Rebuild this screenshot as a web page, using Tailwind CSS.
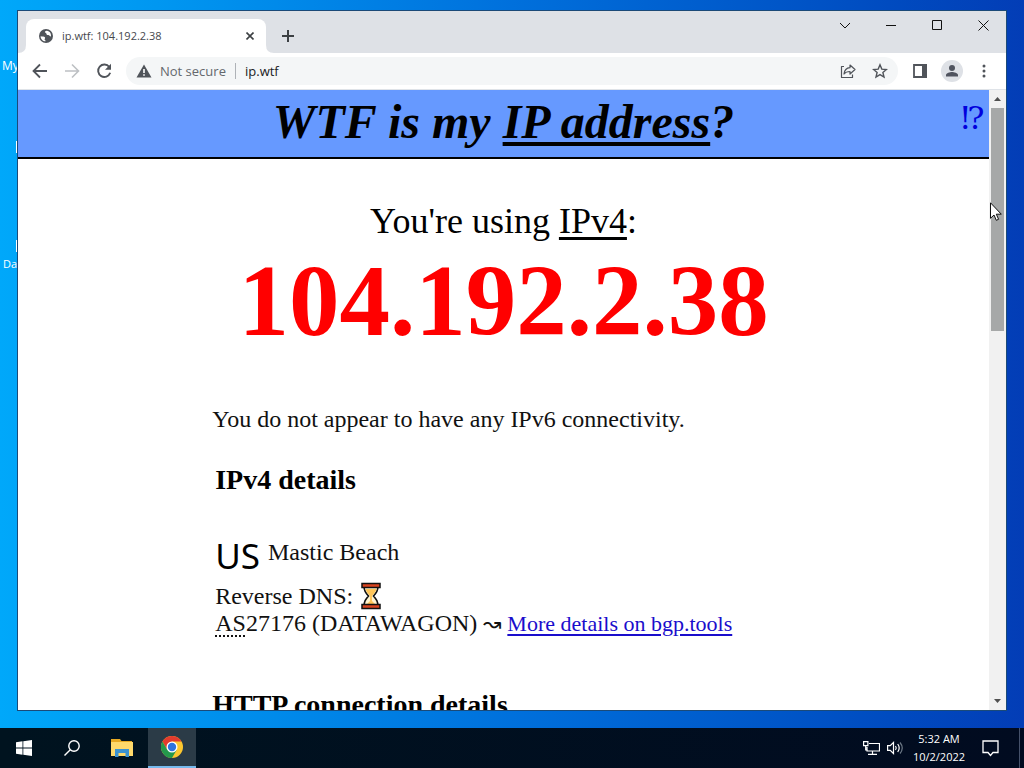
<!DOCTYPE html>
<html lang="en">
<head>
<meta charset="utf-8">
<title>ip.wtf: 104.192.2.38</title>
<script src="https://cdn.jsdelivr.net/npm/@tailwindcss/browser@4"></script>
</head>
<body class="relative flex h-screen flex-col overflow-hidden bg-linear-to-r from-[#00a8fa] via-[#0070dc] to-[#033db6] font-['Open_Sans','Noto_Sans',sans-serif]">
  <!-- Desktop shortcuts partly covered by the browser window -->
  <div class="absolute top-[58px] left-[2px] text-[12px] leading-4 text-white">My</div>
  <div class="absolute top-[141px] left-4 h-3 w-4 bg-white"></div>
  <div class="absolute top-[240px] left-4 h-3 w-4 bg-white"></div>
  <div class="absolute top-[256px] left-[3px] text-[11px] leading-4 text-white">Da</div>

  <!-- Browser window -->
  <section class="relative mt-[10px] mr-[17px] mb-[17px] ml-[17px] flex min-h-0 flex-1 flex-col border border-[#1b4a78] bg-white">
    <header class="flex h-[42px] shrink-0 items-end bg-[#dee1e6] pl-2">
      <div class="relative flex h-[34px] w-60 items-center rounded-t-lg bg-white pr-2 pl-3">
        <svg class="size-4 shrink-0" viewBox="0 0 16 16"><circle cx="8" cy="8" r="7" fill="#50545a"/><path d="M2.6 8.2c1.8.2 3.6.3 4.3 1.1.8.9-.5 1.4-.3 2.3.2.7 1.1.7 1 1.7-2.900 0-5-2.300-5-5.100ZM8.800 2.700c-1.600.3-2.300 1.200-1.700 1.900.6.6 1.200.2 1.300 1.200.1 1 .8 1.300 1.900 1.200 1.300 0 1.200 1.500 2.600 1.600C13.500 6 12 3 8.800 2.700Z" fill="#fff"/></svg>
        <span class="ml-2 flex-1 text-[11px] leading-4 text-[#45484d]">ip.wtf: 104.192.2.38</span>
        <button aria-label="Close tab" class="grid size-4 place-items-center"><svg class="size-2" viewBox="0 0 8 8" fill="none" stroke="#3c4043" stroke-width="1.600"><path d="M0.500.5l7 7M7.500.5l-7 7"/></svg></button>
        <svg class="absolute bottom-0 -left-2 size-2" viewBox="0 0 8 8"><path d="M8 0v8H0Q8 8 8 0" fill="#fff"/></svg>
        <svg class="absolute -right-2 bottom-0 size-2" viewBox="0 0 8 8"><path d="M0 0v8h8Q0 8 0 0" fill="#fff"/></svg>
      </div>
      <button aria-label="New tab" class="ml-[14px] grid h-[34px] w-4 place-items-center"><svg class="size-3" viewBox="0 0 12 12" stroke="#3c4043" stroke-width="2"><path d="M6 0v12M0 6h12"/></svg></button>
      <div class="ml-auto flex self-start text-[#111]">
        <button aria-label="Search tabs" class="grid h-7 w-[46px] place-items-center"><svg class="h-[7px] w-3" viewBox="0 0 12 7" fill="none" stroke="currentColor"><path d="M1 1l5 5 5-5"/></svg></button>
        <button aria-label="Minimize" class="grid h-7 w-[46px] place-items-center"><svg class="h-[10px] w-[10px]" viewBox="0 0 10 10" stroke="currentColor"><path d="M0 5.500h10"/></svg></button>
        <button aria-label="Maximize" class="grid h-7 w-[46px] place-items-center"><svg class="size-[10px]" viewBox="0 0 10 10" fill="none" stroke="currentColor"><path d="M.5.5h9v9h-9z"/></svg></button>
        <button aria-label="Close" class="grid h-7 w-[46px] place-items-center"><svg class="size-[11px]" viewBox="0 0 11 11" fill="none" stroke="currentColor"><path d="M.5.500l10 10M10.500.5l-10 10"/></svg></button>
      </div>
    </header>

    <nav class="flex h-[37px] shrink-0 items-center border-b border-[#dfe3e8] text-[#50545a]">
      <button aria-label="Back" class="ml-[14px] grid size-4 place-items-center"><svg class="size-4" viewBox="0 0 16 16" fill="none" stroke="currentColor" stroke-width="1.800"><path d="M15 8H2M8 1.500L1.500 8 8 14.500"/></svg></button>
      <button aria-label="Forward" class="ml-4 grid size-4 place-items-center text-[#bdc0c4]"><svg class="size-4" viewBox="0 0 16 16" fill="none" stroke="currentColor" stroke-width="1.600"><path d="M1 8h13M8 1.500L14.500 8 8 14.500"/></svg></button>
      <button aria-label="Reload" class="ml-4 grid size-4 place-items-center"><svg class="size-4" viewBox="0 0 16 16"><path d="M13.300 4A6.200 6.200 0 1 0 14.200 9.800" fill="none" stroke="currentColor" stroke-width="1.900"/><path d="M15 .8v6H9z" fill="currentColor"/></svg></button>
      <div class="ml-[14px] flex h-7 min-w-0 flex-1 items-center rounded-full bg-[#f4f6f7] pr-[10px] pl-[10px]">
        <svg class="h-[14px] w-4 shrink-0" viewBox="0 0 16 14"><path d="M8 .5L15.500 13.500H.5z" fill="currentColor"/><path d="M7.200 5h1.600v4H7.200zM7.200 10.200h1.600v1.600H7.200z" fill="#fff"/></svg>
        <span class="ml-2 w-[67px] shrink-0 text-[13px] leading-4 whitespace-nowrap text-[#64686d]">Not secure</span>
        <span class="mr-[9px] ml-2 h-4 w-px shrink-0 bg-[#aeb2b7]"></span>
        <input aria-label="Address" value="ip.wtf" class="min-w-0 flex-1 bg-transparent text-[13px] leading-4 text-[#202124] outline-none">
        <button aria-label="Share" class="ml-2 grid size-4 place-items-center"><svg class="size-4" viewBox="0 0 16 16" fill="none" stroke="currentColor" stroke-width="1.200" stroke-linejoin="round"><path d="M4 3.500H1.500v11h11v-3"/><path d="M10 2l5 4.500-5 4.500V8.500c-3 0-4.700.8-6 2.500.4-3.600 2.500-6 6-6.300z"/></svg></button>
        <button aria-label="Bookmark" class="ml-4 grid size-4 place-items-center"><svg class="size-4" viewBox="0 0 16 16" fill="none" stroke="currentColor" stroke-width="1.400"><path d="M8 1.800l1.800 4.300 4.600.4-3.500 3 1.100 4.600L8 11.600l-4 2.500 1.100-4.600-3.500-3 4.600-.4z"/></svg></button>
      </div>
      <button aria-label="Side panel" class="ml-[14px] grid size-4 place-items-center"><svg class="size-[14px]" viewBox="0 0 14 14"><path d="M1 1h12v12H1z" fill="none" stroke="currentColor" stroke-width="1.800"/><path d="M9 0h5v14H9z" fill="currentColor"/></svg></button>
      <button aria-label="Profile" class="ml-[13px] grid size-[22px] place-items-center rounded-full bg-[#dee1e6]"><svg class="size-[14px]" viewBox="0 0 14 14" fill="#50545f"><circle cx="7" cy="4" r="3"/><path d="M1 12.500v-1.500c0-2 4-3 6-3s6 1 6 3v1.500z"/></svg></button>
      <button aria-label="Menu" class="mr-[14px] ml-[13px] grid size-4 place-items-center"><svg class="h-[14px] w-1" viewBox="0 0 4 14" fill="currentColor"><circle cx="2" cy="2" r="1.500"/><circle cx="2" cy="7" r="1.500"/><circle cx="2" cy="12" r="1.500"/></svg></button>
    </nav>

    <div class="flex min-h-0 flex-1">
      <main class="min-w-0 flex-1 overflow-hidden bg-white font-['Liberation_Serif',serif] text-2xl leading-7 text-[#111]">
        <div class="relative h-[69px] border-b-2 border-black bg-[#6699ff] pt-1 text-center">
          <h1 class="text-5xl leading-[56px] font-bold text-black italic">WTF is my <abbr title="Internet Protocol address" class="underline decoration-solid decoration-4 underline-offset-4 [text-decoration-skip-ink:none]">IP address</abbr>?</h1>
          <a href="#about" class="absolute top-2 right-1 font-['DejaVu_Serif',serif] text-[32px] leading-10 text-[#0000dd]">&#8265;&#xFE0E;</a>
        </div>
        <div class="pt-10 text-center">
          <p class="text-4xl leading-[44px] text-black">You're using <abbr title="Internet Protocol version 4" class="underline decoration-solid decoration-3 underline-offset-4">IPv4</abbr>:</p>
          <p class="text-[101px] leading-[116px] font-bold text-[#ff0000]">104.192.2.38</p>
        </div>
        <div class="mx-auto w-3/5">
          <p class="mt-[46px]">You do not appear to have any IPv6 connectivity.</p>
          <div class="pl-[3px]">
            <h2 class="mt-[31px] text-[28px] leading-8 font-bold text-black">IPv4 details</h2>
            <p class="mt-9 flex items-center gap-2"><span class="font-['Noto_Sans',sans-serif] text-[35px] leading-[48px] text-black">US</span><span class="-mt-2">Mastic Beach</span></p>
            <p class="mt-[2px] flex items-center gap-2">Reverse DNS:
              <svg class="h-7 w-5" viewBox="0 0 20 28" role="img" aria-label="loading"><path d="M3 3.500h14c0 5-1.500 7-4.500 10.500C15.500 17.500 17 19.500 17 24.500H3c0-5 1.500-7 4.500-10.500C4.500 10.500 3 8.500 3 3.500z" fill="#fff3cf" stroke="#111" stroke-width="1.600"/><path d="M4.600 7h10.800c-.6 2.700-2.500 4.800-4.400 7v5l4 4H5l4-4v-5C7 11.800 5.200 9.700 4.600 7z" fill="#ffc65a"/><path d="M1 1.500h18v4H1zM1 22.500h18v4H1z" fill="#d8431f" stroke="#111" stroke-width="1.500"/></svg>
            </p>
            <p class="-mt-px whitespace-nowrap"><abbr title="Autonomous System" class="underline decoration-dotted decoration-2 underline-offset-4">AS</abbr>27176 (DATAWAGON) <span class="text-[22px] leading-none">&#8605;</span> <a href="#bgp" class="text-[22px] leading-none text-[#1a0dcc] underline decoration-2 underline-offset-3">More details on bgp.tools</a></p>
          </div>
          <h2 class="mt-[52px] text-[28px] leading-8 font-bold whitespace-nowrap text-black">HTTP connection details</h2>
        </div>
      </main>
      <!-- Page scrollbar -->
      <aside class="flex w-[17px] shrink-0 flex-col items-center bg-[#f1f1f1]" aria-label="Scrollbar">
        <div class="grid h-[18px] shrink-0 place-items-center"><svg class="h-1 w-[7px]" viewBox="0 0 7 4"><path d="M0 4h7L3.500 0z" fill="#505050"/></svg></div>
        <div class="h-[36%] w-[13px] bg-[#a6a8a8]"></div>
        <div class="mt-auto grid h-[18px] place-items-center"><svg class="h-1 w-[7px]" viewBox="0 0 7 4"><path d="M0 0h7L3.500 4z" fill="#505050"/></svg></div>
      </aside>
    </div>
  </section>

  <!-- Taskbar -->
  <footer class="flex h-10 shrink-0 items-center bg-linear-to-r from-[#00131f] to-[#010b20] text-white">
    <button aria-label="Start" class="grid h-10 w-12 place-items-center"><svg class="size-4" viewBox="0 0 16 16" fill="#fff"><path d="M0 2.200L6.500 1.300v6.200H0zM7.300 1.200L16 0v7.500H7.300zM0 8.400h6.500v6.300L0 13.800zM7.300 8.400H16V16l-8.700-1.200z"/></svg></button>
    <button aria-label="Search" class="grid h-10 w-12 place-items-center"><svg class="size-4" viewBox="0 0 16 16" fill="none" stroke="#fff" stroke-width="1.400"><circle cx="10" cy="6" r="5.200"/><path d="M6.300 9.700L.5 15.500"/></svg></button>
    <button aria-label="File Explorer" class="grid h-10 w-[52px] place-items-center"><svg class="h-[18px] w-[22px]" viewBox="0 0 22 18"><path d="M0 0h9l1.500 2H21v4H0z" fill="#e8a922"/><path d="M0 3h22v14H0z" fill="#ffd96b"/><path d="M4 10h14v8h-3.500v-4h-7v4H4z" fill="#3c92cf"/></svg></button>
    <button aria-label="Google Chrome" class="grid h-10 w-12 place-items-center border-b-2 border-[#76b9ed] bg-[#2b3b47]"><svg class="size-[22px]" viewBox="0 0 22 22"><circle cx="11" cy="11" r="11" fill="#fdc72f"/><path d="M1.470 5.500A11 11 0 0 1 20.530 5.500H11L6.240 13.750z" fill="#e23b2e"/><path d="M1.470 5.500A11 11 0 0 0 11 22l4.760-8.250H6.240z" fill="#24984c"/><circle cx="11" cy="11" r="5.500" fill="#fff"/><circle cx="11" cy="11" r="4.200" fill="#2f73df"/></svg></button>
    <div class="ml-auto flex items-center">
      <svg class="h-[14px] w-[17px]" viewBox="0 0 17 14" fill="none" stroke="#fff" stroke-width="1.200"><path d="M6 2.500h10.500v7.500H4V6M9.500 10v3M5 13.300h9M.6.600h4.300v4H.6zM2.700 4.600V9h2"/></svg>
      <svg class="ml-[7px] h-[14px] w-[17px]" viewBox="0 0 17 14" fill="none" stroke="#fff" stroke-width="1.200"><path d="M.6 4.700h2.600L6.500 1.500v11L3.200 9.300H.6z"/><path d="M8.500 5q1.500 2 0 4M10.700 3q3 4 0 8"/><path d="M13 1.500q4.500 5.500 0 11" stroke="#6c7885"/></svg>
      <div class="ml-[6px] w-[58px] text-center text-[11px] leading-[18px]"><p>5:32 AM</p><p>10/2/2022</p></div>
      <button aria-label="Notifications" class="mr-5 ml-[13px] grid h-10 w-[18px] place-items-center"><svg class="h-[17px] w-[17px]" viewBox="0 0 17 17" fill="none" stroke="#fff" stroke-width="1.300"><path d="M1 1h15v11.500h-5L8.500 15.500 6 12.500H1z"/></svg></button>
      <span class="mr-1 h-10 w-px bg-[#45516a]"></span>
    </div>
  </footer>

  <!-- Mouse pointer -->
  <svg class="pointer-events-none absolute top-[202px] left-[990px] h-[19px] w-3" viewBox="0 0 12 19"><path d="M.5.800v15.500l3.500-3.300 2.300 5.300 2.300-1-2.300-5.100h5z" fill="#fff" stroke="#111"/></svg>
</body>
</html>
